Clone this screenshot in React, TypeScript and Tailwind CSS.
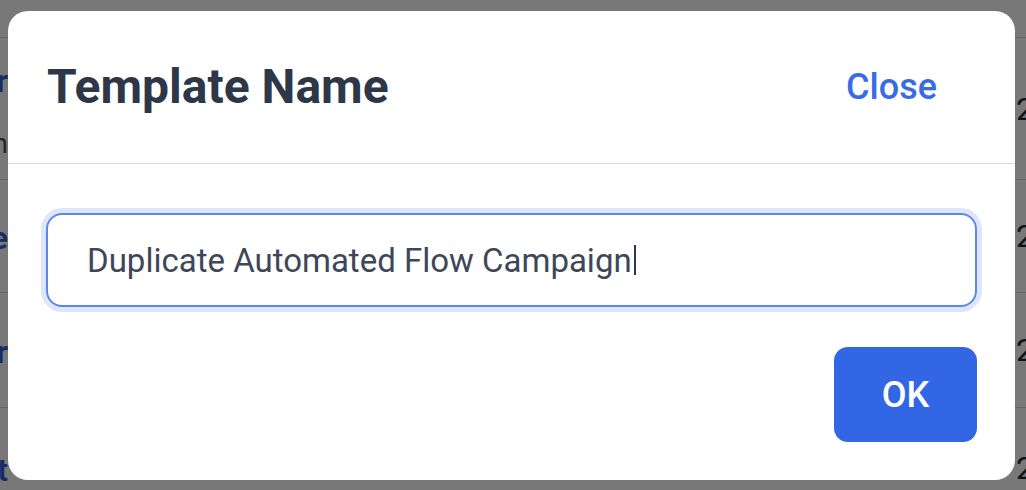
import React from "react";

// Rows of the page that sits behind the dialog
const rows = [
  { h: "h-[142px]", left: ["Welcome Newsletter", "Created by admin"], right: "2024" },
  { h: "h-[113px]", left: ["Abandoned Cart Welcome"], right: "2024" },
  { h: "h-[115px]", left: ["Winback Offer"], right: "2024" },
  { h: "h-[120px]", left: ["Sunset Post-t"], right: "2024" },
];

function BackgroundPage() {
  return (
    <div className="absolute inset-0 bg-white font-['Roboto','Liberation_Sans',sans-serif]">
      <div className="h-[38px] border-b border-gray-300" />
      {rows.map((row) => (
        <div key={row.left[0]} className={`${row.h} flex items-center justify-between border-b border-gray-300`}>
          <div className="w-[8px] flex flex-col items-end gap-[18px] pt-[4px]">
            <span className="whitespace-nowrap text-[32px] font-semibold text-[#2f5fd8]">{row.left[0]}</span>
            {row.left[1] && <span className="whitespace-nowrap text-[28px] text-gray-600">{row.left[1]}</span>}
          </div>
          <div className="w-[10px] whitespace-nowrap text-[32px] text-gray-800">{row.right}</div>
        </div>
      ))}
    </div>
  );
}

export default function App() {
  return (
    <div className="relative w-[1026px] h-[490px] overflow-hidden font-['Roboto','Liberation_Sans',sans-serif]">
      <BackgroundPage />

      {/* ── Backdrop ─────────────────────────────────────── */}
      <div className="absolute inset-0 bg-black/[0.53] pl-[8px] pt-[11px]">
        {/* ── Dialog ─────────────────────────────────────── */}
        <div className="w-[1007px] h-[469px] bg-white rounded-[20px] flex flex-col">
          <div className="h-[153px] flex items-center justify-between pl-[39px] pr-[78px] border-b border-[#d9d9d9]">
            <h2 className="text-[48px] font-bold leading-none text-[#2d3748]">Template Name</h2>
            <button className="text-[36px] font-medium leading-none text-[#3a6be6]">Close</button>
          </div>

          <div className="px-[38px] pt-[49px]">
            <div className="h-[94px] flex items-center pl-[39px] border-2 border-[#5b86ee] rounded-[16px] ring-[5px] ring-[#dde6fb]">
              <span className="text-[33px] leading-none text-[#3d4759] whitespace-nowrap">
                Duplicate Automated Flow Campaign
              </span>
              <span className="ml-[2px] w-[2px] h-[30px] bg-[#2d3748]" />
            </div>

            <div className="flex justify-end mt-[40px]">
              <button className="w-[143px] h-[95px] rounded-[14px] bg-[#3366e5] text-white text-[36px] font-medium leading-none">
                OK
              </button>
            </div>
          </div>
        </div>
      </div>
    </div>
  );
}
